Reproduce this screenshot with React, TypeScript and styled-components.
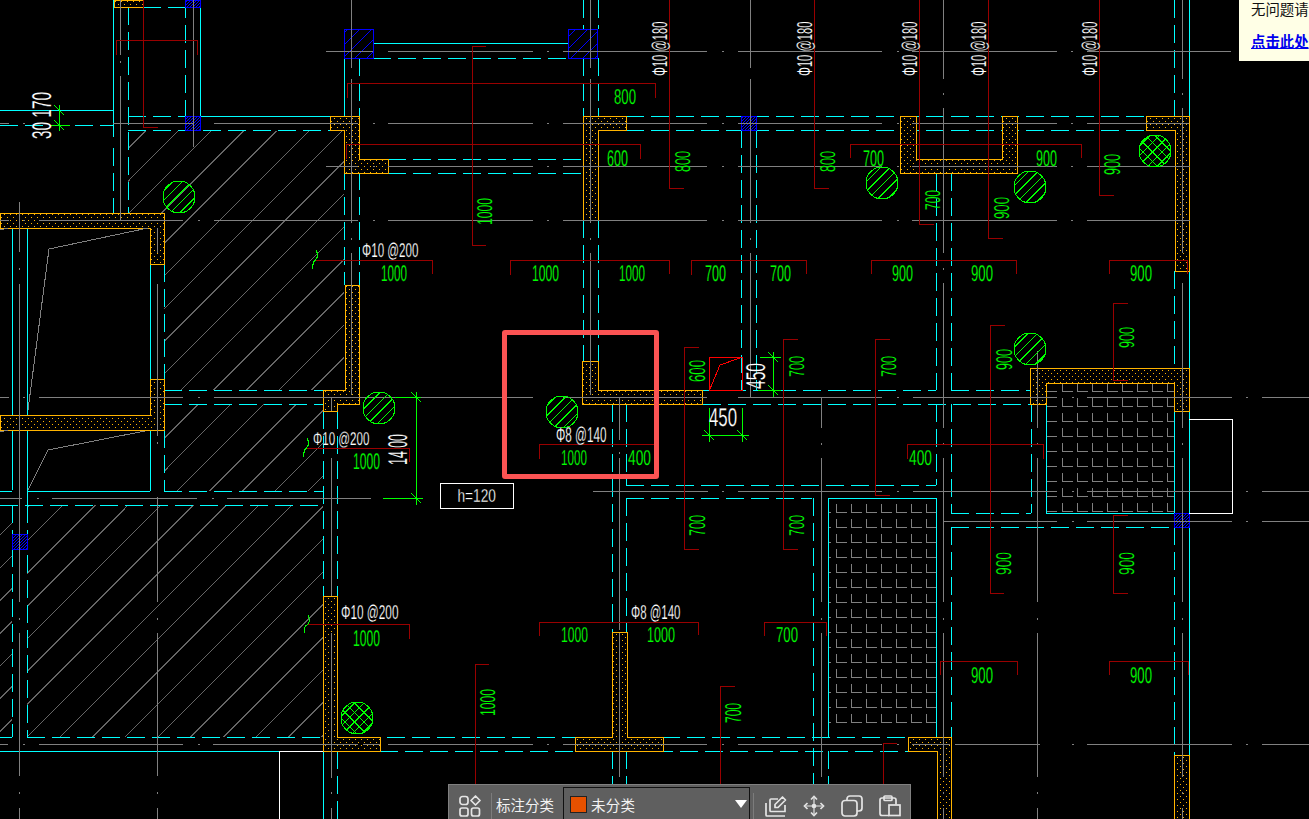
import React from 'react';
import styled, { createGlobalStyle } from 'styled-components';

const GREY = '#808080';
const CYAN = '#0ff';
const RED = '#990000';
const GREEN = '#00ff00';
const ORANGE = '#ffb400';
const BLUE = '#0000ff';

const GlobalStyle = createGlobalStyle`
  html, body {
    margin: 0;
    padding: 0;
    background: #000;
    overflow: hidden;
  }
`;

const Page = styled.div`
  position: relative;
  width: 1309px;
  height: 819px;
  overflow: hidden;
  background: #000;
  font-family: "Noto Sans CJK SC", "Liberation Sans", sans-serif;
`;

const Drawing = styled.svg`
  display: block;
  width: 1309px;
  height: 819px;
  shape-rendering: crispEdges;
`;

const Stroke = styled.path<{ $color: string; $dash?: string }>`
  fill: none;
  stroke: ${p => p.$color};
  stroke-width: 1;
  stroke-dasharray: ${p => p.$dash ?? 'none'};
`;

const Wall = styled.polygon`
  fill: url(#wallDots);
  stroke: ${ORANGE};
  stroke-width: 1;
`;

const Outline = styled.rect`
  fill: none;
  stroke: ${BLUE};
  stroke-width: 1;
`;

const Ring = styled.circle`
  fill: none;
  stroke: ${GREEN};
  stroke-width: 1;
`;

const Label = styled.text<{ $color: string }>`
  fill: ${p => p.$color};
  stroke: #000;
  stroke-width: 0.2;
  font-family: "Liberation Sans", sans-serif;
  text-rendering: geometricPrecision;
`;

const Highlight = styled.div`
  position: absolute;
  left: 502px;
  top: 330px;
  width: 157px;
  height: 149px;
  box-sizing: border-box;
  border: 5px solid #fb5353;
  border-radius: 3px;
`;

const HeightTag = styled.div`
  position: absolute;
  left: 440px;
  top: 483px;
  width: 74px;
  height: 26px;
  box-sizing: border-box;
  border: 1px solid #fff;
  background: #000;
  color: #fff;
  display: flex;
  align-items: center;
  justify-content: center;
  font-family: "Liberation Sans", sans-serif;
  font-size: 19px;
  -webkit-text-stroke: 0.3px #000;
`;

const TagText = styled.span`
  display: inline-block;
  transform: scaleX(0.72);
`;

const Notice = styled.div`
  position: absolute;
  right: 0;
  top: 0;
  width: 58px;
  height: 61px;
  padding-left: 12px;
  background: #ffffe6;
  color: #111;
  font-size: 14.4px;
  line-height: 20px;
  white-space: nowrap;
  overflow: hidden;
`;

const NoticeLine = styled.div`
  margin-top: -1px;
  margin-bottom: 12px;
`;

const NoticeLink = styled.a`
  color: #0000ee;
  font-weight: 700;
  text-decoration: underline;
`;

const Toolbar = styled.div`
  position: absolute;
  left: 448px;
  top: 784px;
  width: 463px;
  height: 44px;
  box-sizing: border-box;
  display: flex;
  align-items: flex-start;
  padding: 2px 0 0 10px;
  background: #5f5f5f;
  border: 1px solid #808080;
  color: #f2f2f2;
`;

const ToolIcon = styled.svg<{ $gap?: number }>`
  flex: none;
  width: 22px;
  height: 22px;
  margin-top: 8px;
  margin-right: ${p => p.$gap ?? 0}px;
  fill: none;
  stroke: #e4e4e4;
  stroke-width: 1.7;
`;

const Divider = styled.div<{ $gap: number }>`
  flex: none;
  width: 1px;
  height: 26px;
  margin-top: 6px;
  margin-right: ${p => p.$gap}px;
  background: #7c7c7c;
`;

const ToolLabel = styled.span`
  flex: none;
  width: 67px;
  margin-top: 7px;
  font-size: 14.5px;
  line-height: 22px;
  white-space: nowrap;
`;

const Select = styled.div`
  flex: none;
  box-sizing: border-box;
  width: 187px;
  height: 44px;
  display: flex;
  align-items: flex-start;
  padding: 8px 0 0 6px;
  margin-right: 3px;
  border: 1px solid #111;
  position: relative;
`;

const Swatch = styled.span`
  flex: none;
  width: 17px;
  height: 17px;
  box-sizing: border-box;
  border: 1px solid #222;
  background: #e65100;
  margin-right: 4px;
`;

const SelectText = styled.span`
  font-size: 14.5px;
  line-height: 17px;
  letter-spacing: 0.3px;
`;

const Caret = styled.span`
  position: absolute;
  right: 2px;
  top: 12px;
  width: 0;
  height: 0;
  border-left: 6px solid transparent;
  border-right: 6px solid transparent;
  border-top: 8px solid #fff;
`;

const segs = (make: (a: number, b: number) => string, pts: number[]) => {
  let d = '';
  for (let i = 0; i + 1 < pts.length; i += 2) d += make(pts[i], pts[i + 1]);
  return d;
};
const h = (y: number, ...xs: number[]) => segs((a, b) => `M${a} ${y}H${b}`, xs);
const v = (x: number, ...ys: number[]) => segs((a, b) => `M${x} ${a}V${b}`, ys);

// 45 degree strokes over a box; back=true gives the opposite slope
const hatch = (x0: number, y0: number, x1: number, y1: number, period: number, phase: number, back = false) => {
  let d = '';
  if (back) {
    for (let c = x0 - y1 + ((phase - (x0 - y1)) % period + period) % period; c <= x1 - y0; c += period) {
      d += `M${c + y0} ${y0}L${c + y1} ${y1}`;
    }
    return d;
  }
  for (let c = x0 + y0 + ((phase - (x0 + y0)) % period + period) % period; c <= x1 + y1; c += period) {
    d += `M${c - y1} ${y1}L${c - y0} ${y0}`;
  }
  return d;
};

const gridTail = [388, 533, 547, 548.5, 563, 707, 722, 723.5, 738, 882, 897, 898.5, 912, 1057, 1071, 1072.5];

const greyLines = [
  h(51, 326, 373, ...gridTail, 1087, 1231),
  h(123, 0, 9, 23, 24.5, 113, 193, 214, 358, 373, 374.5, ...gridTail, 1087, 1189),
  h(166, 326, 358, 373, 374.5, ...gridTail, 1087, 1190),
  h(220, 0, 9, 23, 24.5, 39, 183, 198, 199.5, 214, 358, 373, 374.5, ...gridTail, 1087, 1190),
  h(397, 0, 9, 23, 24.5, 39, 183, 198, 199.5, 214, 533, 563, 707, 738, 882, 897, 898.5, 913, 1057, 1072, 1073.5, 1087, 1232, 1246, 1247.5, 1262, 1309),
  h(491, 593, 708, 722, 723.5, 738, 882, 897, 898.5, 913, 1057, 1072, 1073.5, 1087, 1232, 1246, 1247.5, 1262, 1309),
  h(498, 0, 22, 37, 38.5, 52, 197, 212, 213.5, 227, 371),
  h(521, 943, 1057, 1072, 1073.5, 1087, 1232, 1246, 1247.5, 1262, 1309),
  h(744, 0, 8, 23, 24.5, 39, 183, 198, 199.5, 213, 358, 363, 380, ...gridTail.slice(0, 12), 912, 950, 955, 1040, 1072, 1073.5, 1087, 1232, 1246, 1247.5, 1262, 1309),
  v(19, 202, 252, 268, 269.5, 284, 602, 618, 619.5, 633, 776, 792, 793.5, 808, 819),
  v(157, 228, 253, 284, 436, 442, 443.5, 497, 602, 618, 619.5, 633, 776, 792, 793.5, 808, 819),
  v(120, 0, 55, 61, 62.5, 76, 220),
  v(193, 0, 147),
  v(331, 398, 411, 458, 596, 633, 778, 792, 793.5, 808, 819),
  v(351, 0, 68, 79, 223, 238, 239.5, 253, 395),
  v(590, 0, 68, 79, 223, 238, 239.5, 253, 395),
  v(619, 398, 440, 452, 453.5, 458, 630, 633, 777, 792, 793.5, 808, 819),
  v(750, 0, 68, 79, 223, 238, 239.5, 253, 397),
  v(821, 397, 428, 443, 444.5, 458, 602, 618, 619.5, 633, 777, 792, 793.5, 808, 819),
  v(943, 0, 79, 93, 94.5, 108, 253, 268, 269.5, 283, 428, 443, 444.5, 458, 602, 618, 619.5, 633, 777, 792, 793.5, 808, 819),
  v(1037, 351, 428, 443, 444.5, 458, 602, 618, 619.5, 633, 777, 792, 793.5, 808, 819),
  v(1182, 0, 79, 93, 94.5, 108, 253, 283, 428, 443, 444.5, 458, 602, 618, 619.5, 633, 777, 792, 793.5, 808, 819),
  'M148 228L49 249L28 410M145 431L48 450L28 490M0 230L8 228M0 432L8 430',
].join('');

const cyanSolid = [
  h(110, 0, 113), h(43, 373, 568), h(116, 200, 330),
  v(113, 0, 137), v(200, 0, 116), v(344, 58, 116),
  v(12, 228, 490), v(27, 228, 505), h(491, 27, 150, 0, 12),
  v(150, 264, 379, 430, 491),
  h(498, 828, 936), v(828, 498, 737), v(936, 498, 737),
  h(737, 0, 12), h(751, 0, 323), v(323, 751, 819),
  v(1189, 0, 368, 411, 513, 527, 819), v(1174, 382, 513), v(1046, 383, 513), h(513, 1046, 1174),
].join('');

const cyanDashed = [
  h(125, 0, 113), h(7, 143, 185), v(113, 148, 213), v(128, 7, 213), v(185, 0, 116),
  h(116, 128, 185), h(130, 128, 330), h(58, 373, 568), v(359, 58, 116),
  v(344, 172, 285), v(359, 172, 285), h(159, 388, 583), h(173, 388, 583),
  v(583, 0, 29, 58, 116, 220, 361), v(598, 0, 29, 58, 116, 220, 361),
  h(116, 626, 1146), h(130, 626, 1146), v(741, 130, 390), v(756, 130, 390),
  v(1174, 0, 116, 271, 368, 527, 755), v(936, 173, 390, 404, 485), v(951, 173, 390, 404, 513, 527, 737),
  h(390, 164, 323, 703, 936, 951, 1031), h(404, 164, 323, 703, 1031),
  v(1031, 404, 513), h(485, 626, 936), h(498, 626, 812),
  v(612, 404, 632, 751, 784), v(626, 404, 485, 498, 632, 751, 784), v(813, 498, 784), v(828, 751, 784),
  h(513, 951, 1031), h(527, 951, 1174), v(164, 264, 379, 430, 491), h(491, 164, 323),
  h(505, 0, 323), v(27, 505, 737), v(12, 505, 534, 549, 737), h(737, 27, 323),
  v(323, 411, 596), v(337, 411, 596, 751, 819), h(737, 337, 908), h(751, 380, 908),
].join('');

const redLines = [
  'M116 55V40H197V55', 'M143 0V127H158', 'M347 98V83H655V98', 'M346 159V144H640V159',
  'M486 46H472V245H486', 'M669 0V188H684', 'M315 260H432V274', 'M510 275V260H669V274',
  'M691 275V260H806V274', 'M871 274V260H1016V274', 'M1109 274V260H1187V274', 'M850 158V144H1081V158',
  'M814 0V188H829', 'M919 0V224H934', 'M988 0V238H1003', 'M1099 0V195H1114',
  'M1128 303H1113V380H1128', 'M1005 325H990V593H1004', 'M699 347H684V549H699', 'M798 339H783V549H798',
  'M890 339H875V495H890', 'M907 459V444H1043V459', 'M539 459V444H655', 'M307 448H409V462',
  'M1128 515H1113V593H1128', 'M307 624H409V639', 'M539 636V622H698V635', 'M764 636V622H826V636',
  'M489 664H475V785', 'M735 686H720V785', 'M897 743H883V785', 'M940 675V661H1017V675', 'M1109 675V661H1188V675',
].join('');

const tick = (x: number, y: number) => `M${x - 5} ${y - 5}L${x + 5} ${y + 5}`;

const greenLines = [
  v(59, 105, 131), h(125, 50, 70), tick(59, 110), tick(59, 125),
  v(416, 392, 505), h(397, 395, 421), h(498, 383, 423), tick(416, 397), tick(416, 498),
  v(709, 408, 442), v(742, 408, 442), h(435, 702, 749), tick(709, 435), tick(742, 435),
  v(773, 352, 397), h(357, 760, 781), h(390, 758, 781), tick(773, 357), tick(773, 390),
  'M316 250C318 254 318 257 316 259C313 262 312 265 313 269',
  'M307 438C309 442 309 445 307 447C304 450 303 453 304 457',
  'M308 615C310 619 310 621 308 624C305 626 303 629 305 633',
].join('');

// paving squares: each cell is an L, one vertical stroke and one foot
const paving = (xs: number[], ys: number[], right: number) => {
  let d = '';
  ys.forEach(y => xs.forEach(x => {
    d += `M${x} ${y - 8}V${y}H${Math.min(x + 11, right)}`;
  }));
  return d;
};
const steps = (from: number, n: number) => Array.from({ length: n }, (_, i) => from + i * 15);
const pavingLines =
  paving(steps(1062, 8), steps(391, 9), 1174) +
  steps(391, 9).map(y => h(y, 1047, 1057)).join('') +
  paving(steps(836, 7), steps(512, 15), 936) +
  steps(512, 15).map(y => h(y, 829, 831)).join('');

const walls = [
  '114,0 143,0 143,7 114,7',
  '0,213 164,213 164,264 150,264 150,228 0,228',
  '150,379 164,379 164,430 0,430 0,415 150,415',
  '330,116 359,116 359,159 388,159 388,173 344,173 344,130 330,130',
  '583,116 626,116 626,130 598,130 598,220 583,220',
  '345,285 359,285 359,404 337,404 337,411 323,411 323,390 345,390',
  '582,361 598,361 598,390 702,390 702,404 582,404',
  '900,116 916,116 916,159 1002,159 1002,116 1017,116 1017,173 900,173',
  '1146,116 1189,116 1189,271 1175,271 1175,130 1146,130',
  '1030,368 1189,368 1189,411 1174,411 1174,383 1046,383 1046,404 1030,404',
  '323,596 337,596 337,737 380,737 380,751 323,751',
  '612,632 627,632 627,737 663,737 663,751 575,751 575,737 612,737',
  '908,737 951,737 951,825 937,825 937,751 908,751',
  '1174,755 1189,755 1189,825 1174,825',
];

const columns = [
  { x: 185, y: 0, w: 15, h: 7, period: 3 },
  { x: 185, y: 116, w: 15, h: 14, period: 3 },
  { x: 344, y: 29, w: 29, h: 29, period: 12 },
  { x: 568, y: 29, w: 29, h: 29, period: 12 },
  { x: 741, y: 116, w: 15, h: 14, period: 3 },
  { x: 12, y: 534, w: 15, h: 15, period: 3 },
  { x: 1174, y: 513, w: 15, h: 14, period: 3 },
];

const bars = [
  { x: 179, y: 197 }, { x: 379, y: 408 }, { x: 562, y: 412 }, { x: 882, y: 183 },
  { x: 1030, y: 187 }, { x: 1155, y: 151, cross: true }, { x: 1030, y: 349 }, { x: 357, y: 718, cross: true },
];

const slabs = [
  { pts: '128,131 344,131 344,390 164,390 164,213 128,213', box: [128, 131, 344, 390], phase: 15 },
  { pts: '164,404 323,404 323,491 164,491', box: [164, 404, 323, 491], phase: 14 },
  { pts: '27,505 323,505 323,737 27,737', box: [27, 505, 323, 737], phase: 12 },
  { pts: '0,505 12,505 12,737 0,737', box: [0, 505, 12, 737], phase: 12 },
];

type Note = [string, number, number, number, number];

// flat notes: text, left, right, top, bottom of the ink
const flatGreen: Note[] = [
  ['800', 614, 636, 89, 104], ['600', 607, 628, 150, 166], ['1000', 381, 407, 265, 281],
  ['1000', 532, 559, 265, 281], ['1000', 619, 645, 265, 281], ['700', 705, 726, 265, 281],
  ['700', 770, 791, 265, 281], ['700', 863, 884, 150, 166], ['900', 1036, 1057, 150, 166],
  ['900', 892, 913, 265, 281], ['900', 971, 993, 265, 281], ['900', 1130, 1152, 265, 281],
  ['1000', 353, 380, 453, 469], ['1000', 561, 587, 450, 465], ['400', 628, 651, 450, 465],
  ['400', 909, 932, 450, 465], ['1000', 353, 380, 630, 646], ['1000', 561, 588, 627, 642],
  ['1000', 647, 675, 627, 642], ['700', 776, 798, 627, 642], ['900', 971, 993, 667, 683],
  ['900', 1130, 1152, 667, 683],
];

const flatWhite: Note[] = [
  ['Φ10 @200', 362, 418, 243, 257], ['Φ10 @200', 313, 369, 432, 445], ['Φ8 @140', 556, 606, 427, 442],
  ['Φ10 @200', 341, 398, 605, 619], ['Φ8 @140', 631, 680, 605, 619], ['450', 709, 737, 408, 426],
];

// notes that read bottom to top
const upGreen: Note[] = [
  ['1000', 477, 492, 198, 225], ['800', 675, 690, 151, 172], ['800', 820, 835, 151, 172],
  ['700', 925, 940, 190, 210], ['900', 994, 1009, 197, 219], ['900', 1104, 1120, 154, 175],
  ['600', 689, 705, 360, 382], ['700', 789, 804, 356, 377], ['700', 881, 896, 356, 377],
  ['900', 996, 1012, 349, 370], ['900', 1119, 1134, 327, 348], ['700', 689, 705, 515, 536],
  ['700', 789, 804, 515, 536], ['900', 996, 1011, 552, 575], ['900', 1119, 1134, 552, 575],
  ['1000', 480, 495, 689, 716], ['700', 725, 741, 703, 723],
];

const upWhite: Note[] = [
  ['30 170', 32, 51, 92, 139], ['Φ10 @180', 652, 667, 22, 76], ['Φ10 @180', 797, 812, 22, 76],
  ['Φ10 @180', 902, 917, 22, 76], ['Φ10 @180', 971, 986, 22, 76], ['Φ10 @180', 1082, 1097, 22, 76],
  ['14 00', 388, 407, 434, 465], ['450', 746, 765, 363, 389],
];

// width of a note in em, from the metrics of Liberation Sans
const emWidth = (text: string) =>
  [...text].reduce((sum, ch) => sum + (ch === ' ' ? 0.278 : ch === '@' ? 1.015 : ch === 'Φ' ? 0.76 : 0.556), 0);

const NoteText = ({ note, color, up }: { note: Note; color: string; up?: boolean }) => {
  const [text, x0, x1, y0, y1] = note;
  const height = up ? x1 - x0 : y1 - y0;
  const length = up ? y1 - y0 : x1 - x0;
  const size = height / 0.7;
  const squeeze = length / (emWidth(text) * size);
  const place = up ? `translate(${x1} ${y1}) rotate(-90)` : `translate(${x0} ${y1})`;
  return (
    <Label $color={color} transform={`${place} scale(${squeeze.toFixed(3)} 1)`} fontSize={size}>
      {text}
    </Label>
  );
};

const Defs = () => (
  <defs>
    <pattern id="wallDots" width="6" height="6" patternUnits="userSpaceOnUse">
      <rect width="6" height="6" fill="#000" />
      <rect x="1" y="1" width="1" height="1" fill={ORANGE} />
      <rect x="4" y="4" width="1" height="1" fill={ORANGE} />
    </pattern>
    {slabs.map((s, i) => (
      <clipPath id={`slab${i}`} key={s.pts}>
        <polygon points={s.pts} />
      </clipPath>
    ))}
    {bars.map((b, i) => (
      <clipPath id={`bar${i}`} key={`${b.x}-${b.y}`}>
        <circle cx={b.x} cy={b.y} r={16} />
      </clipPath>
    ))}
    {columns.map((c, i) => (
      <clipPath id={`col${i}`} key={`${c.x}-${c.y}`}>
        <rect x={c.x} y={c.y} width={c.w} height={c.h} />
      </clipPath>
    ))}
  </defs>
);

const App: React.FC = () => {
  return (
    <Page>
      <GlobalStyle />
      <Drawing viewBox="0 0 1309 819">
        <Defs />
        {slabs.map((s, i) => {
          const [x0, y0, x1, y1] = s.box;
          return (
            <g key={s.pts} clipPath={`url(#slab${i})`}>
              <Stroke d={hatch(x0, y0, x1, y1, 32.7, s.phase)} $color="#666" />
            </g>
          );
        })}
        <Stroke d={pavingLines} $color={GREY} />
        <Stroke d={cyanDashed} $color={CYAN} $dash="18 7" />
        <Stroke d={cyanSolid} $color={CYAN} />
        {walls.map(pts => (
          <Wall key={pts} points={pts} />
        ))}
        {columns.map((c, i) => (
          <g key={`${c.x}-${c.y}`}>
            <g clipPath={`url(#col${i})`}>
              <Stroke d={hatch(c.x, c.y, c.x + c.w, c.y + c.h, c.period, 5)} $color={BLUE} />
            </g>
            <Outline x={c.x} y={c.y} width={c.w} height={c.h} />
          </g>
        ))}
        <Stroke d={greyLines} $color={GREY} />
        <Stroke d="M1189 419H1232V513H1189M279 819V751H323" $color="#fff" />
        <Stroke d={redLines} $color={RED} />
        {bars.map((b, i) => (
          <g key={`${b.x}-${b.y}`}>
            <g clipPath={`url(#bar${i})`}>
              <Stroke d={hatch(b.x - 16, b.y - 16, b.x + 16, b.y + 16, 9.5, 3)} $color={GREEN} />
              {b.cross && <Stroke d={hatch(b.x - 16, b.y - 16, b.x + 16, b.y + 16, 9.5, 3, true)} $color={GREEN} />}
            </g>
            <Ring cx={b.x} cy={b.y} r={16} />
          </g>
        ))}
        <Stroke d={greenLines} $color={GREEN} />
        <Stroke d="M709 357H742V390H709ZM710 389L720 365L740 358" $color="#ff0000" />
        {flatGreen.map(n => (
          <NoteText key={`${n[1]}-${n[3]}`} note={n} color={GREEN} />
        ))}
        {flatWhite.map(n => (
          <NoteText key={`${n[1]}-${n[3]}`} note={n} color="#fff" />
        ))}
        {upGreen.map(n => (
          <NoteText key={`${n[1]}-${n[3]}`} note={n} color={GREEN} up />
        ))}
        {upWhite.map(n => (
          <NoteText key={`${n[1]}-${n[3]}`} note={n} color="#fff" up />
        ))}
      </Drawing>

      <Highlight />
      <HeightTag>
        <TagText>h=120</TagText>
      </HeightTag>

      <Notice>
        <NoticeLine>无问题请</NoticeLine>
        <NoticeLink href="#">点击此处</NoticeLink>
      </Notice>

      <Toolbar>
        <ToolIcon viewBox="0 0 22 22" $gap={10}>
          <rect x="1" y="1.5" width="8" height="8" rx="2.5" />
          <path d="M16.5 1L21 5.5L16.5 10L12 5.5Z" strokeLinejoin="round" />
          <rect x="1" y="13" width="8" height="8" rx="2" />
          <rect x="12.5" y="13" width="8" height="8" rx="2" />
        </ToolIcon>
        <Divider $gap={4} />
        <ToolLabel>标注分类</ToolLabel>
        <Select>
          <Swatch />
          <SelectText>未分类</SelectText>
          <Caret />
        </Select>
        <Divider $gap={11} />
        <ToolIcon viewBox="0 0 22 22" $gap={16}>
          <path d="M1 8V20a1 1 0 0 0 1 1H20" />
          <path d="M13 4H6a1 1 0 0 0-1 1V15.500a1 1 0 0 0 1 1H20V10" />
          <path d="M10 12.500V9.500L17.500 2L20.500 5L13 12.500Z" strokeLinejoin="round" />
        </ToolIcon>
        <ToolIcon viewBox="0 0 22 22" $gap={16}>
          <path d="M11 3V19M3 11H19" strokeWidth="1.2" />
          <path d="M8 4.500L11 1.500L14 4.500M8 17.500L11 20.500L14 17.500M4.500 8L1.500 11L4.500 14M17.500 8L20.500 11L17.500 14" />
          <circle cx="11" cy="11" r="1.500" fill="#e4e4e4" />
        </ToolIcon>
        <ToolIcon viewBox="0 0 22 22" $gap={16}>
          <rect x="1" y="5.500" width="15" height="15.500" rx="3" />
          <path d="M6 5.500V4a3 3 0 0 1 3-3H18a3 3 0 0 1 3 3V13a3 3 0 0 1-3 3H16" />
        </ToolIcon>
        <ToolIcon viewBox="0 0 22 22">
          <path d="M10 20.500H3a2 2 0 0 1-2-2V5a2 2 0 0 1 2-2H15a2 2 0 0 1 2 2V9.500" />
          <rect x="5" y="1" width="8" height="4.500" rx="1" />
          <rect x="10" y="10" width="11" height="10.500" />
        </ToolIcon>
      </Toolbar>
    </Page>
  );
};

export default App;
